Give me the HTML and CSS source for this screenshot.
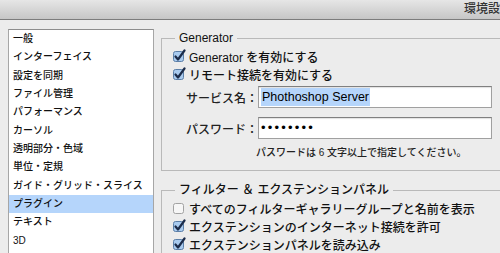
FILE: index.html
```html
<!DOCTYPE html>
<html lang="ja">
<head>
    <meta charset="UTF-8">
    <title>環境設定</title>
    <link rel="stylesheet" href="styles.css">
</head>
<body>

    <div class="titlebar">環境設定</div>

    <div class="main">
        <!-- 左のカテゴリ一覧 -->
        <ul class="category-list">
            <li>一般</li>
            <li>インターフェイス</li>
            <li>設定を同期</li>
            <li>ファイル管理</li>
            <li>パフォーマンス</li>
            <li>カーソル</li>
            <li>透明部分・色域</li>
            <li>単位・定規</li>
            <li>ガイド・グリッド・スライス</li>
            <li class="selected">プラグイン</li>
            <li>テキスト</li>
            <li>3D</li>
        </ul>

        <div class="panel">
            <fieldset class="group">
                <legend>Generator</legend>
                <div class="check-row">
                    <svg class="box" width="14" height="14" viewBox="0 0 14 14"><rect x="1.5" y="2.5" width="10" height="10" rx="2" class="on"/><path d="M3.5 7.5 L6 10.5 L12.5 1.5" class="mark"/></svg>
                    <span>Generator を有効にする</span>
                </div>
                <div class="check-row">
                    <svg class="box" width="14" height="14" viewBox="0 0 14 14"><rect x="1.5" y="2.5" width="10" height="10" rx="2" class="on"/><path d="M3.5 7.5 L6 10.5 L12.5 1.5" class="mark"/></svg>
                    <span>リモート接続を有効にする</span>
                </div>
                <div class="field-row first">
                    <label>サービス名：</label>
                    <div class="field"><span class="sel">Phothoshop Server</span></div>
                </div>
                <div class="field-row">
                    <label>パスワード：</label>
                    <div class="field dots">••••••••</div>
                </div>
                <p class="hint">パスワードは 6 文字以上で指定してください。</p>
            </fieldset>

            <fieldset class="group second">
                <legend>フィルター ＆ エクステンションパネル</legend>
                <div class="check-row">
                    <svg class="box" width="14" height="14" viewBox="0 0 14 14"><rect x="1.5" y="2.5" width="10" height="10" rx="2" class="off"/></svg>
                    <span>すべてのフィルターギャラリーグループと名前を表示</span>
                </div>
                <div class="check-row">
                    <svg class="box" width="14" height="14" viewBox="0 0 14 14"><rect x="1.5" y="2.5" width="10" height="10" rx="2" class="on"/><path d="M3.5 7.5 L6 10.5 L12.5 1.5" class="mark"/></svg>
                    <span>エクステンションのインターネット接続を許可</span>
                </div>
                <div class="check-row">
                    <svg class="box" width="14" height="14" viewBox="0 0 14 14"><rect x="1.5" y="2.5" width="10" height="10" rx="2" class="on"/><path d="M3.5 7.5 L6 10.5 L12.5 1.5" class="mark"/></svg>
                    <span>エクステンションパネルを読み込み</span>
                </div>
            </fieldset>
        </div>
    </div>

</body>
</html>
```

FILE: styles.css
```css
body {
    margin: 0;
    width: 500px;
    height: 253px;
    overflow: hidden;
    background-color: #ececec;
    font-family: "Liberation Sans", "Noto Sans CJK JP", sans-serif;
    font-weight: 500;
    color: #111;
}
.titlebar {
    height: 19px;
    border-bottom: 1px solid #7c7c7c;
    background: linear-gradient(#e6e6e6, #c6c6c6);
    padding-left: 464px;
    font-size: 12px;
    line-height: 18px;
    color: #333;
    white-space: nowrap;
    overflow: hidden;
}
.main {
    display: flex;
    height: 224px;
    overflow: hidden;
    padding: 9px 0 0 8px;
}
.category-list {
    flex: none;
    width: 144px;
    height: 240px;
    margin: 0;
    padding: 0;
    list-style: none;
    background-color: #fff;
    border: 1px solid #a6a6a6;
    border-top-color: #8e8e8e;
}
.category-list li {
    height: 18.35px;
    line-height: 18.35px;
    padding-left: 4px;
    font-size: 10px;
    white-space: nowrap;
}
.category-list li.selected {
    background-color: #b5d5fb;
}
.panel {
    flex: none;
    width: 360px;
    margin-left: 7px;
}
.group {
    margin: 1px 0 0 0;
    padding: 1px 0 10px 10px;
    border: 1px solid #b9b9b9;
    min-width: 0;
}
.group legend {
    margin-left: 3px;
    padding: 0 4px;
    font-size: 12px;
    line-height: 16px;
}
.group.second {
    margin-top: 11px;
}
.check-row {
    display: flex;
    align-items: center;
    height: 18px;
    font-size: 12px;
    white-space: nowrap;
}
.check-row .box {
    flex: none;
    margin-right: 3px;
}
.box .on {
    fill: #a9cbef;
    stroke: #5b7fa8;
}
.box .off {
    fill: #f6f6f6;
    stroke: #a2a2a2;
}
.box .mark {
    fill: none;
    stroke: #1c2c4a;
    stroke-width: 2.2;
    stroke-linecap: round;
    stroke-linejoin: round;
}
.field-row {
    display: flex;
    align-items: center;
    margin-top: 9px;
}
.field-row.first {
    margin-top: 3px;
}
.field-row label {
    width: 86px;
    text-align: right;
    font-size: 12px;
    color: #222;
}
.field {
    width: 230px;
    height: 20px;
    padding-left: 2px;
    background-color: #fff;
    border: 1px solid #a0a0a0;
    border-top-color: #808080;
    box-shadow: inset 0 1px 1px rgba(0, 0, 0, 0.12);
    font-size: 12.5px;
    line-height: 20px;
    color: #000;
    white-space: nowrap;
}
.field .sel {
    background-color: #b5d5fb;
    padding: 2px 1px;
}
.field.dots {
    letter-spacing: 2.2px;
    font-size: 13px;
}
.hint {
    margin: 7px 0 0 84px;
    font-size: 10px;
    line-height: 14px;
    color: #222;
    white-space: nowrap;
}
```
